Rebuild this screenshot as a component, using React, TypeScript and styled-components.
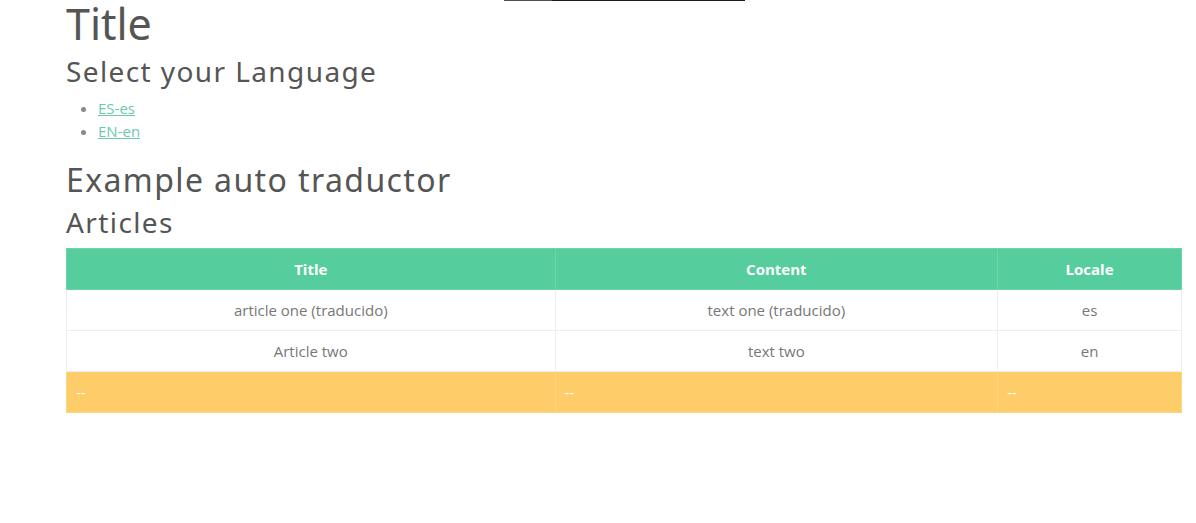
import React from "react";
import styled, { createGlobalStyle } from "styled-components";

const Global = createGlobalStyle`
  html, body { margin: 0; padding: 0; background: #fff; }
  body { font-family: "Open Sans", "Noto Sans", Arial, sans-serif; color: #555; }
`;

const TopBar = styled.div`
  position: fixed;
  top: 0;
  left: 504px;
  width: 241px;
  height: 1px;
  display: flex;
`;

const BarSeg = styled.div<{ $w: number; $c: string }>`
  width: ${(p) => p.$w}px;
  height: 1px;
  background: ${(p) => p.$c};
`;

const Page = styled.main`
  margin: 0 14px 0 66px;
  padding-top: 0;
`;

const H1 = styled.h1`
  font-family: "Noto Sans", "Open Sans", sans-serif;
  font-weight: 400;
  font-size: 43px;
  line-height: 48px;
  margin: 0;
  color: #555;
`;

const H2 = styled.h2<{ $size: number; $ls: number; $mt: number }>`
  font-family: "Noto Sans", "Open Sans", sans-serif;
  font-weight: 400;
  font-size: ${(p) => p.$size}px;
  line-height: 1.2;
  margin: ${(p) => p.$mt}px 0 0;
  color: #555;
  letter-spacing: ${(p) => p.$ls}px;
`;

const LangList = styled.ul`
  margin: 8px 0 18px;
  padding-left: 32px;
  list-style: disc;
  color: #888;
  font-size: 15px;
  line-height: 23px;
`;

const LangLink = styled.a`
  color: #6cc9ad;
  text-decoration: underline;
  font-family: "Open Sans", sans-serif;
  font-size: 15px;
`;

const Table = styled.table`
  width: 100%;
  border-collapse: collapse;
  margin-top: 8px;
  font-size: 15px;
`;

const Th = styled.th<{ $w: number }>`
  width: ${(p) => p.$w}px;
  height: 41px;
  box-sizing: border-box;
  background: #55cd9c;
  color: #fff;
  font-weight: 700;
  text-align: center;
  border: 1px solid #6dd4aa;
  padding: 0 8px;
`;

const Td = styled.td`
  height: 41px;
  box-sizing: border-box;
  text-align: center;
  color: #777;
  border: 1px solid #efefef;
  padding: 0 8px;
`;

const FootTd = styled.td`
  height: 41px;
  box-sizing: border-box;
  background: #fecd69;
  color: #fff;
  text-align: left;
  border: 1px solid #fdd47f;
  padding: 0 9px;
`;

const rows = [
  { title: "article one (traducido)", content: "text one (traducido)", locale: "es" },
  { title: "Article two", content: "text two", locale: "en" },
];

export default function App() {
  return (
    <>
      <Global />
      <TopBar>
        <BarSeg $w={48} $c="#4b5158" />
        <BarSeg $w={193} $c="#1a1a1a" />
      </TopBar>
      <Page>
        <H1>Title</H1>
        <H2 $size={28} $ls={1.4} $mt={7}>Select your Language</H2>
        <LangList>
          <li><LangLink href="#">ES-es</LangLink></li>
          <li><LangLink href="#">EN-en</LangLink></li>
        </LangList>
        <H2 $size={32} $ls={1.4} $mt={0}>Example auto traductor</H2>
        <H2 $size={28} $ls={1.4} $mt={7}>Articles</H2>
        <Table>
          <thead>
            <tr>
              <Th $w={489}>Title</Th>
              <Th $w={443}>Content</Th>
              <Th $w={184}>Locale</Th>
            </tr>
          </thead>
          <tbody>
            {rows.map((r) => (
              <tr key={r.title}>
                <Td>{r.title}</Td>
                <Td>{r.content}</Td>
                <Td>{r.locale}</Td>
              </tr>
            ))}
            <tr>
              <FootTd>--</FootTd>
              <FootTd>--</FootTd>
              <FootTd>--</FootTd>
            </tr>
          </tbody>
        </Table>
      </Page>
    </>
  );
}
